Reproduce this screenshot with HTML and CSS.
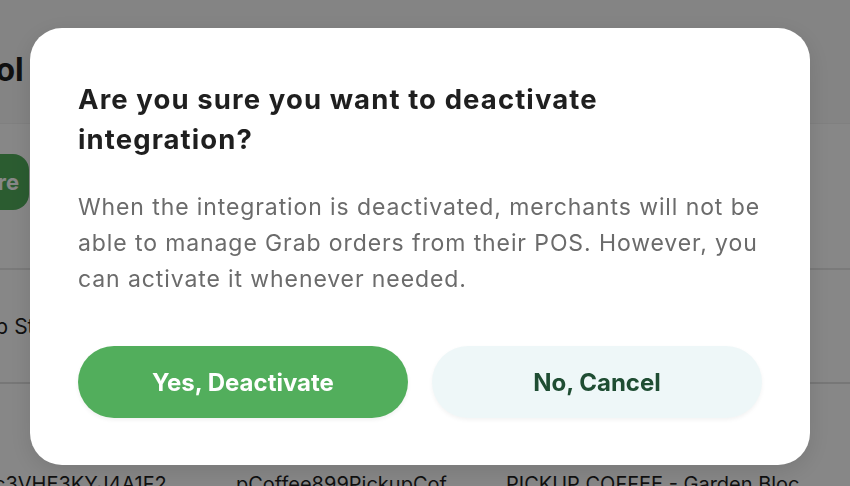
FILE: index.html
```html
<!DOCTYPE html>
<html lang="en">
<head>
<meta charset="utf-8">
<title>Deactivate integration</title>
<link rel="stylesheet" href="styles.css">
</head>
<body>
<div class="page">
  <header class="page-header">
    <h1 class="page-title">Grab Tool Integration</h1>
  </header>
  <section class="toolbar">
    <button class="btn-explore">Explore</button>
  </section>
  <div class="row row-store">
    <span class="cell">Grab Store</span>
  </div>
  <div class="row row-data">
    <span class="cell c1">c3VHE3KYJ4A1F2</span>
    <span class="cell c2">pCoffee899PickupCof</span>
    <span class="cell c3">PICKUP COFFEE - Garden Bloc</span>
  </div>
</div>

<div class="overlay"></div>

<div class="modal" role="dialog" aria-modal="true">
  <h2 class="modal-title">Are you sure you want to deactivate integration?</h2>
  <p class="modal-text">When the integration is deactivated, merchants will not be able to manage Grab orders from their POS. However, you can activate it whenever needed.</p>
  <div class="modal-actions">
    <button class="btn btn-primary">Yes, Deactivate</button>
    <button class="btn btn-secondary">No, Cancel</button>
  </div>
</div>
</body>
</html>
```

FILE: styles.css
```css
* { box-sizing: border-box; }
html, body {
  margin: 0;
  padding: 0;
  width: 850px;
  height: 486px;
  overflow: hidden;
  font-family: Inter, "Noto Sans", "Liberation Sans", sans-serif;
  background: #ffffff;
  color: #1f1f1f;
}

.page {
  width: 1200px;
  margin-left: -88px;
}
.page-header {
  height: 124px;
  background: #f9f9f9;
  border-bottom: 1px solid #f1f1f1;
  display: flex;
  align-items: flex-start;
  padding-top: 50px;
}
.page-title {
  margin: 0 0 0 -38px;
  font-size: 32px;
  line-height: 40px;
  font-weight: 700;
  white-space: nowrap;
}
.toolbar {
  height: 146px;
  border-bottom: 2px solid #e6e6e6;
  padding-top: 30px;
}
.btn-explore {
  height: 56px;
  border: none;
  border-radius: 16px;
  background: #52ae5c;
  color: #fff;
  font: 700 22px Inter, sans-serif;
  padding: 0 10px 0 0;
  width: 117px;
  text-align: right;
}
.row {
  display: flex;
  align-items: center;
  font-size: 20px;
}
.row-store {
  height: 114px;
  border-bottom: 2px solid #e0e0e0;
  padding-left: 48px;
  font-size: 21px;
}
.row-data {
  height: 100px;
  align-items: flex-start;
  padding-top: 88px;
  padding-left: 82px;
  font-size: 20px;
  line-height: 24px;
}
.cell { white-space: nowrap; }
.c1 { width: 242px; }
.c2 { width: 270px; overflow: hidden; }

.overlay {
  position: fixed;
  inset: 0;
  background: rgba(0, 0, 0, 0.47);
}

.modal {
  position: fixed;
  left: 30px;
  top: 28px;
  width: 780px;
  height: 437px;
  background: #ffffff;
  border-radius: 32px;
  padding: 51px 48px 0 48px;
  box-shadow: 0 6px 24px rgba(0, 0, 0, 0.12);
}
.modal-title {
  margin: 0;
  font-size: 27.5px;
  line-height: 40px;
  font-weight: 700;
  letter-spacing: 1.1px;
  color: #1f1f1f;
  width: 620px;
}
.modal-text {
  margin: 30px -14px 0 0;
  font-size: 23px;
  line-height: 36px;
  letter-spacing: 0.9px;
  color: #6b6b6b;
}
.modal-actions {
  display: flex;
  gap: 24px;
  margin-top: 49px;
}
.btn {
  flex: 1;
  height: 72px;
  border: none;
  border-radius: 36px;
  font-family: Inter, sans-serif;
  font-weight: 700;
  font-size: 24px;
}
.btn-primary {
  background: #52ae5c;
  color: #ffffff;
  box-shadow: 0 2px 4px rgba(0, 0, 0, 0.06);
}
.btn-secondary {
  background: #eef7f8;
  color: #1f4d33;
  box-shadow: 0 2px 4px rgba(0, 0, 0, 0.05);
}
```
